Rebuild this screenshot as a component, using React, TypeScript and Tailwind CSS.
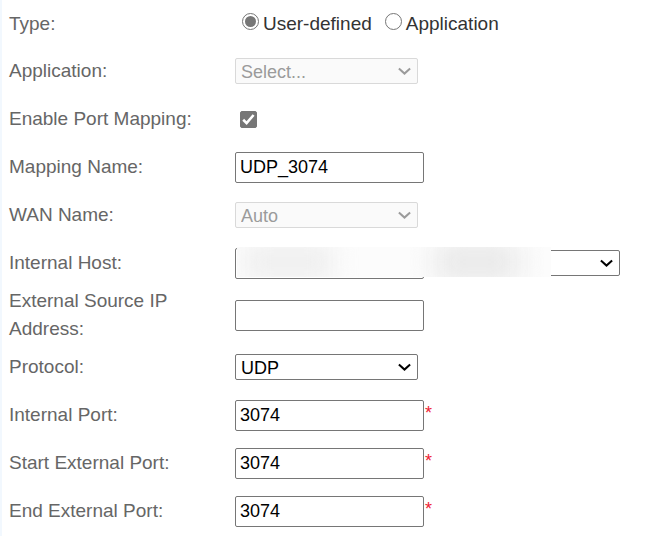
import React, { useState } from "react";

const ROW = "flex min-h-12 items-center";
const LABEL = "w-[226px] shrink-0 text-[19px] leading-7 text-[#666666]";
const BOX =
  "h-[31px] w-[189px] rounded-[2px] border border-[#767676] bg-white px-1 pt-px text-[18px] text-black";

function Chevron() {
  return (
    <svg
      viewBox="0 0 14 8"
      className="pointer-events-none absolute top-1/2 right-1.5 h-2 w-3.5 -translate-y-1/2"
      fill="none"
      stroke="currentColor"
      strokeWidth="2"
      aria-hidden="true"
    >
      <path d="M0.9 1.4 L6.5 6.6 L12.1 1.4" />
    </svg>
  );
}

type DropProps = {
  id: string;
  options: string[];
  disabled?: boolean;
};

function Drop({ id, options, disabled }: DropProps) {
  const tone = disabled
    ? "border-[#d9d9d9] bg-[#fafafa] text-[#9b9b9b]"
    : "border-[#767676] bg-white text-black";
  return (
    <div className={`relative w-[183px] ${disabled ? "text-[#9b9b9b]" : "text-black"}`}>
      <select
        id={id}
        disabled={disabled}
        className={`block h-[26px] w-full appearance-none rounded-[2px] border pt-px pr-6 pl-[5px] text-[18px] leading-6 opacity-100 ${tone}`}
      >
        {options.map((o) => (
          <option key={o}>{o}</option>
        ))}
      </select>
      <Chevron />
    </div>
  );
}

type FieldProps = { id: string; label: string; children: React.ReactNode };

function Field({ id, label, children }: FieldProps) {
  return (
    <div className={ROW}>
      <label htmlFor={id} className={LABEL}>
        {label}
      </label>
      {children}
    </div>
  );
}

function PortField({ id, label }: { id: string; label: string }) {
  return (
    <Field id={id} label={label}>
      <input id={id} type="text" defaultValue="3074" required className={BOX} />
      <span className="pb-1 pl-px text-[18px] text-[#ee2233]">*</span>
    </Field>
  );
}

const RADIO =
  "mb-1 size-[17px] appearance-none rounded-full border border-[#767676] bg-white bg-clip-content p-[2px] checked:bg-[#767676]";

export default function App() {
  const [type, setType] = useState("user");
  const [enabled, setEnabled] = useState(true);

  return (
    <form className="min-h-screen border-l-2 border-[#f2f8fe] bg-white pl-[7px] font-['Liberation_Sans',Arial,sans-serif]">
      <div role="radiogroup" aria-labelledby="type-label" className="flex min-h-[47px] items-center">
        <span id="type-label" className={LABEL}>
          Type:
        </span>
        <div className="flex gap-[13px] pl-[7px] text-[19px] leading-7 text-[#333333]">
          <label className="flex items-center gap-1">
            <input
              type="radio"
              name="type"
              checked={type === "user"}
              onChange={() => setType("user")}
              className={RADIO}
            />
            User-defined
          </label>
          <label className="flex items-center gap-1">
            <input
              type="radio"
              name="type"
              checked={type === "app"}
              onChange={() => setType("app")}
              className={RADIO}
            />
            Application
          </label>
        </div>
      </div>

      <Field id="application" label="Application:">
        <Drop id="application" options={["Select..."]} disabled />
      </Field>

      <Field id="enable" label="Enable Port Mapping:">
        <div className="relative ml-[5px] size-[17px]">
          <input
            id="enable"
            type="checkbox"
            checked={enabled}
            onChange={(e) => setEnabled(e.target.checked)}
            className="block size-full appearance-none rounded-[2px] border border-[#767676] bg-white checked:bg-[#767676]"
          />
          <svg
            viewBox="0 0 17 17"
            className="pointer-events-none absolute inset-0 size-full"
            fill="none"
            stroke="#ffffff"
            strokeWidth="2.6"
            aria-hidden="true"
          >
            <path d="M3.2 8.8 L6.6 12.1 L13.6 4" />
          </svg>
        </div>
      </Field>

      <Field id="mapping-name" label="Mapping Name:">
        <input id="mapping-name" type="text" defaultValue="UDP_3074" className={BOX} />
      </Field>

      <Field id="wan-name" label="WAN Name:">
        <Drop id="wan-name" options={["Auto"]} disabled />
      </Field>

      <Field id="host" label="Internal Host:">
        <div className="relative w-full max-w-[385px]">
          <input id="host" type="text" className={`block ${BOX}`} />
          <select
            aria-label="Known hosts"
            className="absolute top-[2px] right-0 h-[26px] w-[196px] appearance-none rounded-[2px] border border-[#767676] bg-white"
          >
            <option></option>
          </select>
          <Chevron />
          <div className="pointer-events-none absolute -top-px right-[69px] left-[2px] h-[30px] overflow-hidden bg-[#fcfcfc]">
            <div className="absolute -top-1 left-2 h-[38px] w-[88px] bg-[#efefef] blur-[12px]" />
            <div className="absolute -top-1 right-8 h-[38px] w-[84px] bg-[#e8e8e8] blur-[14px]" />
          </div>
        </div>
      </Field>

      <div className="flex min-h-14 items-center">
        <label htmlFor="source-ip" className={LABEL}>
          External Source IP Address:
        </label>
        <input id="source-ip" type="text" className={BOX} />
      </div>

      <Field id="protocol" label="Protocol:">
        <Drop id="protocol" options={["UDP", "TCP", "TCP/UDP"]} />
      </Field>

      <PortField id="internal-port" label="Internal Port:" />
      <PortField id="start-port" label="Start External Port:" />
      <PortField id="end-port" label="End External Port:" />
    </form>
  );
}
